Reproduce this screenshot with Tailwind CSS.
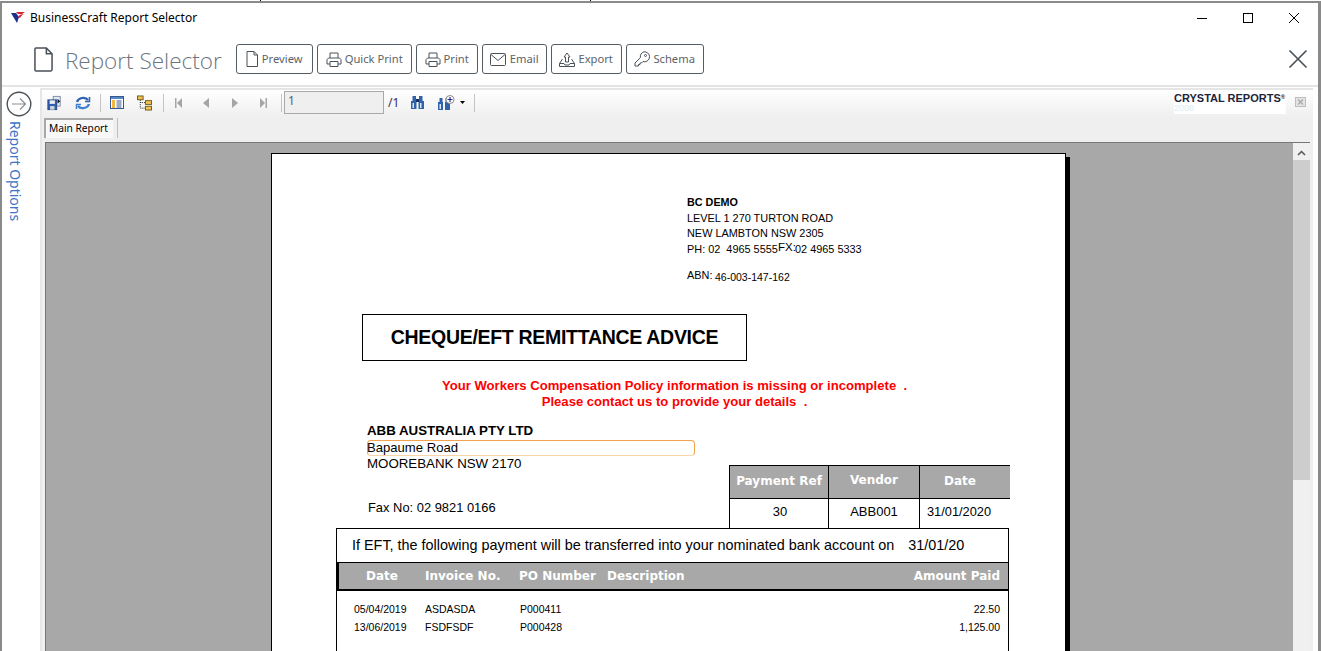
<!DOCTYPE html>
<html lang="en">
  <head>
    <meta charset="UTF-8" />
    <title>BusinessCraft Report Selector</title>
    <script src="https://cdn.jsdelivr.net/npm/@tailwindcss/browser@4"></script>
  </head>
  <body class="w-[1321px] h-[651px] overflow-hidden bg-white font-['Open_Sans',sans-serif]">
    <!-- Desktop strip behind the window -->
    <div class="h-[3px] bg-white border-b-2 border-[#8a8a8a] flex">
      <div class="ml-[260px] w-px h-px bg-black"></div>
      <div class="ml-[329px] w-px h-px bg-black"></div>
    </div>

    <div class="h-[648px] border-l-2 border-r-[3px] border-[#8a8a8a] flex flex-col">
      <!-- Title bar -->
      <div class="h-[30px] flex items-center shrink-0">
        <svg class="ml-[8px] w-[16px] h-[14px]" viewBox="0 0 16 14">
          <path d="M1 2h5l3 4-2 6z" fill="#1c2f8f" />
          <path d="M6 1h9l-3 2H8z" fill="#d8232a" />
          <path d="M8 6c1-2 3-3 6-3-2 1-3 2-4 4z" fill="#d8232a" />
        </svg>
        <span class="ml-[4px] text-[12px] text-black font-['Noto_Sans',sans-serif]">BusinessCraft Report Selector</span>
        <div class="ml-auto flex items-center text-black">
          <svg class="w-[12px] h-[12px]" viewBox="0 0 12 12"><path d="M1 6.500h10" stroke="#000" /></svg>
          <svg class="ml-[34px] w-[12px] h-[12px]" viewBox="0 0 12 12"><rect x="1.500" y="1.500" width="9" height="9" fill="none" stroke="#000" /></svg>
          <svg class="ml-[34px] mr-[18px] w-[12px] h-[12px]" viewBox="0 0 12 12"><path d="M1 1l10 10M11 1L1 11" stroke="#000" /></svg>
        </div>
      </div>

      <!-- Header -->
      <div class="h-[54px] flex items-center shrink-0 border-b-2 border-[#e4e4e4]">
        <svg class="ml-[32px] w-[19px] h-[25px]" viewBox="0 0 20 26" fill="none" stroke="#4a5259" stroke-width="1.600">
          <path d="M2 1h11l6 6v16.500a1.500 1.500 0 0 1-1.500 1.500h-15.500a1 1 0 0 1-1-1V2a1 1 0 0 1 1-1z" />
          <path d="M13 1v6h6" />
        </svg>
        <span class="ml-[12px] pt-[4px] text-[22.500px] leading-none font-light text-[#6b7580] font-['Open_Sans',sans-serif] whitespace-nowrap">Report Selector</span>

        <div class="ml-[14px] flex gap-[4px] text-[11.200px] text-[#5b6369] font-['Noto_Sans',sans-serif]">
          <div class="w-[77px] h-[30px] border border-[#555c62] rounded-[3px] flex items-center justify-center gap-[4px]">
            <svg class="w-[12px] h-[16px]" viewBox="0 0 12 16" fill="none" stroke="#4a5259"><path d="M1 .5h7l3.500 3.500v11.500H1zM8 .5V4h3.500" /></svg>
            Preview
          </div>
          <div class="w-[95px] h-[30px] border border-[#555c62] rounded-[3px] flex items-center justify-center gap-[3px]">
            <svg class="w-[16px] h-[15px]" viewBox="0 0 16 15" fill="none" stroke="#4a5259"><path d="M4 6V1h8v5M1 12V7.500L2.500 6h11L15 7.500V12h-3M4 12H1M4 9.500h8v5H4z" /></svg>
            Quick Print
          </div>
          <div class="w-[62px] h-[30px] border border-[#555c62] rounded-[3px] flex items-center justify-center gap-[3px]">
            <svg class="w-[16px] h-[15px]" viewBox="0 0 16 15" fill="none" stroke="#4a5259"><path d="M4 6V1h8v5M1 12V7.500L2.500 6h11L15 7.500V12h-3M4 12H1M4 9.500h8v5H4z" /></svg>
            Print
          </div>
          <div class="w-[65px] h-[30px] border border-[#555c62] rounded-[3px] flex items-center justify-center gap-[4px]">
            <svg class="w-[16px] h-[13px]" viewBox="0 0 16 13" fill="none" stroke="#4a5259"><rect x=".5" y=".5" width="15" height="12" rx="1" /><path d="M1 1.500l7 6 7-6" /></svg>
            Email
          </div>
          <div class="w-[71px] h-[30px] border border-[#555c62] rounded-[3px] flex items-center justify-center gap-[3px]">
            <svg class="w-[16px] h-[15px]" viewBox="0 0 16 15" fill="none" stroke="#4a5259"><path d="M3.500 7L.5 11.500v3h15v-3L12.500 7M.5 11.500h4.500l1 1.500h4l1-1.500h4.500M5 5l3-4 3 4H9.500v5h-3V5z" /></svg>
            Export
          </div>
          <div class="w-[78px] h-[30px] border border-[#555c62] rounded-[3px] flex items-center justify-center gap-[3px]">
            <svg class="w-[16px] h-[16px]" viewBox="0 0 16 16" fill="none" stroke="#4a5259"><path d="M10 .8a5 5 0 0 1 1 10 5 5 0 0 1-2-.3L7.500 12H6v1.500H4.500V15H1v-3l5.400-5.300A5 5 0 0 1 10 .8z" /><circle cx="11.500" cy="4.500" r="1" /></svg>
            Schema
          </div>
        </div>

        <svg class="ml-auto mr-[10px] w-[20px] h-[20px]" viewBox="0 0 20 20"><path d="M1.500 1.500l17 17M18.500 1.500l-17 17" stroke="#4a5259" stroke-width="1.700" /></svg>
      </div>

      <!-- Body -->
      <div class="flex-1 flex min-h-0">
        <!-- Report options rail -->
        <div class="w-[38px] shrink-0 flex flex-col items-center pt-[4px]">
          <svg class="w-[26px] h-[26px] mr-[5px]" viewBox="0 0 26 26" fill="none"><circle cx="13" cy="13" r="11.800" stroke="#4a5259" stroke-width="1.400" /><path d="M6 13h13M14 7.500l5.500 5.500-5.500 5.500" stroke="#8a9096" stroke-width="1.200" /></svg>
          <span class="mt-[4px] mr-[13px] text-[14px] leading-[18px] text-[#3f74c4] font-['Noto_Sans',sans-serif] whitespace-nowrap [writing-mode:vertical-rl]">Report Options</span>
        </div>

        <!-- Viewer -->
        <div class="w-[1273px] mt-[1px] border-l-2 border-t-2 border-[#e6e6e6] bg-[#efefef] flex flex-col min-h-0">
          <!-- Viewer toolbar -->
          <div class="h-[27px] pb-[2px] flex items-center shrink-0 bg-gradient-to-b from-white to-[#efefef]">
            <svg class="ml-[5px] w-[15px] h-[16px]" viewBox="0 0 17 17">
              <rect x="7" y="1" width="8" height="11" fill="#dfe6f2" stroke="#7b8aa8" />
              <path d="M12 4l3 2.500-3 2.500z" fill="#111" />
              <rect x="1" y="5" width="10" height="11" fill="#2f5fae" stroke="#24437c" />
              <rect x="3" y="5.500" width="6" height="4" fill="#e8edf6" />
              <rect x="3.500" y="12" width="5" height="4" fill="#d0d6e0" />
            </svg>
            <svg class="ml-[13px] w-[16px] h-[14px]" viewBox="0 0 16 14" fill="none" stroke-width="2.200">
              <path d="M2 6c1-4 8-6 11-2" stroke="#2f62b5" />
              <path d="M14 8c-1 4-8 6-11 2" stroke="#3f7fd0" />
              <path d="M14.500 1v4.500H10" stroke="#2f62b5" stroke-width="1.500" />
              <path d="M1.500 13V8.500H6" stroke="#3f7fd0" stroke-width="1.500" />
            </svg>
            <div class="ml-[9px] w-px h-[18px] bg-[#c4c4c4]"></div>
            <svg class="ml-[9px] w-[14px] h-[13px]" viewBox="0 0 14 13">
              <rect x=".5" y=".5" width="13" height="12" fill="#fff" stroke="#34598f" />
              <rect x="1" y="1" width="12" height="2" fill="#5a86c5" />
              <rect x="2" y="4" width="3" height="8" fill="#f0b840" />
              <path d="M6.500 5h5M6.500 7h5M6.500 9h5M6.500 11h5" stroke="#34598f" />
            </svg>
            <svg class="ml-[13px] w-[15px] h-[16px]" viewBox="0 0 16 16">
              <rect x=".5" y=".5" width="6" height="4" fill="#f2c14e" stroke="#6b5a20" />
              <rect x="9" y="5.500" width="6.500" height="4" fill="#f2c14e" stroke="#6b5a20" />
              <rect x="9" y="11.500" width="6.500" height="4" fill="#f2c14e" stroke="#6b5a20" />
              <path d="M3.500 5v8.500H9M3.500 7.500H9" stroke="#222" stroke-dasharray="1 1" fill="none" />
            </svg>
            <div class="ml-[11px] w-px h-[18px] bg-[#c4c4c4]"></div>
            <svg class="ml-[11px] w-[7px] h-[10px]" viewBox="0 0 7 10" fill="#a5a5a5"><rect width="1.500" height="10" /><path d="M7 0v10L2 5z" /></svg>
            <svg class="ml-[21px] w-[6px] h-[10px]" viewBox="0 0 6 10" fill="#a5a5a5"><path d="M6 0v10L0 5z" /></svg>
            <svg class="ml-[23px] w-[6px] h-[10px]" viewBox="0 0 6 10" fill="#a5a5a5"><path d="M0 0v10l6-5z" /></svg>
            <svg class="ml-[22px] w-[7px] h-[10px]" viewBox="0 0 7 10" fill="#a5a5a5"><rect x="5.500" width="1.500" height="10" /><path d="M0 0v10l5-5z" /></svg>
            <div class="ml-[14px] w-px h-[18px] bg-[#c4c4c4]"></div>
            <div class="ml-[2px] w-[100px] h-[23px] border border-[#a9a9a9] bg-[#efefef] text-[12px] leading-[17px] pl-[3px] text-[#5c5c80] font-['Noto_Sans',sans-serif]">1</div>
            <span class="ml-[4px] text-[12px] text-[#3a2a60] font-['Noto_Sans',sans-serif]">/1</span>
            <svg class="ml-[11px] w-[15px] h-[15px]" viewBox="0 0 15 15" fill="#2f62a8"><rect x="1" y="6" width="5.500" height="8" /><rect x="8.500" y="6" width="5.500" height="8" /><rect x="2.500" y="1" width="3.500" height="6" /><rect x="9" y="1" width="3.500" height="6" /><rect x="6" y="4" width="3" height="3" fill="#16306b" /><rect x="2.500" y="8" width="1.500" height="5" fill="#dbe6f6" /><rect x="10" y="8" width="1.500" height="5" fill="#dbe6f6" /></svg>
            <svg class="ml-[13px] w-[17px] h-[16px]" viewBox="0 0 17 16"><g fill="#2f62a8"><rect x="0" y="7" width="5" height="8" /><rect x="7" y="7" width="5" height="8" /><rect x="1.500" y="3" width="3" height="5" /><rect x="7.500" y="3" width="3" height="5" /></g><rect x="1.500" y="9" width="1.500" height="5" fill="#dbe6f6" /><circle cx="12" cy="4.500" r="4" fill="#fff" stroke="#8a8a8a" /><path d="M9.500 4.500h5M12 2v5" stroke="#26308f" stroke-width="1.200" /></svg>
            <svg class="ml-[5px] w-[5px] h-[3px]" viewBox="0 0 5 3"><path d="M0 0h5L2.500 3z" fill="#000" /></svg>
            <div class="ml-[9px] w-px h-[18px] bg-[#c4c4c4]"></div>

            <!-- Crystal logo -->
            <div class="ml-auto mr-[7px] flex items-start">
              <div class="w-[112px] h-[22px] bg-white font-['Liberation_Sans',sans-serif] whitespace-nowrap">
                <div class="text-[11px] leading-[12px] font-bold text-[#20243a]">CRYSTAL REPORTS<sup class="text-[6px]">®</sup></div>
                <div class="text-[9px] leading-[9px] text-[#dcecf0]">2008</div>
              </div>
              <svg class="ml-[9px] mt-[5px] w-[11px] h-[10px]" viewBox="0 0 11 10"><rect x=".5" y=".5" width="10" height="9" fill="#e4e4e4" stroke="#bdbdbd" /><path d="M3 2.500l5 5M8 2.500l-5 5" stroke="#a8a8a8" stroke-width="1.300" /></svg>
            </div>
          </div>

          <!-- Tab strip -->
          <div class="h-[25px] flex items-start shrink-0 pt-[1px]">
            <div class="ml-[2px] w-[69px] h-[20px] border-l-2 border-t-2 border-[#a8a8a8] bg-[#f8f8f8] text-[10.200px] leading-[17px] pl-[3px] text-black font-['Noto_Sans',sans-serif] whitespace-nowrap">Main Report</div>
            <div class="ml-[4px] w-px h-[20px] bg-[#bdbdbd]"></div>
          </div>

          <!-- Page area -->
          <div class="ml-[3px] mr-[3px] flex-1 min-h-0 border-t border-l border-[#777] flex">
            <div class="relative flex-1 bg-[#a8a8a8] overflow-hidden">
              <div class="absolute left-[225px] top-[10px] w-[795px] h-[600px] bg-white border border-black shadow-[4px_4px_0_#000] font-['Liberation_Sans',sans-serif] text-black">
                <!-- Company block -->
                <div class="absolute left-[415px] top-[42px] text-[10.800px] font-bold leading-[12px] whitespace-nowrap">BC DEMO</div>
                <div class="absolute left-[415px] top-[58px] text-[10.900px] leading-[12px] whitespace-nowrap">LEVEL 1 270 TURTON ROAD</div>
                <div class="absolute left-[415px] top-[73px] text-[10.900px] leading-[12px] whitespace-nowrap">NEW LAMBTON NSW 2305</div>
                <div class="absolute left-[415px] top-[89px] text-[10.900px] leading-[12px] whitespace-nowrap">PH: 02&nbsp; 4965 5555</div>
                <div class="absolute left-[506px] top-[87px] text-[11.500px] leading-[12px] whitespace-nowrap">FX:</div>
                <div class="absolute left-[523px] top-[89px] text-[10.900px] leading-[12px] whitespace-nowrap">02 4965 5333</div>
                <div class="absolute left-[415px] top-[115px] text-[10.900px] leading-[12px] whitespace-nowrap">ABN:</div>
                <div class="absolute left-[443px] top-[117px] text-[10.500px] leading-[12px] whitespace-nowrap">46-003-147-162</div>

                <!-- Title box -->
                <div class="absolute left-[90px] top-[160px] w-[385px] h-[47px] border border-black flex items-center justify-center text-[19.500px] font-bold tracking-[-0.3px] whitespace-nowrap">CHEQUE/EFT REMITTANCE ADVICE</div>

                <!-- Warning -->
                <div class="absolute left-[90px] top-[224px] w-[625px] text-center text-[13.100px] font-bold leading-[16px] text-[#ff0000]">
                  <div>Your Workers Compensation Policy information is missing or incomplete&nbsp; .</div>
                  <div>Please contact us to provide your details&nbsp; .</div>
                </div>

                <!-- Vendor address -->
                <div class="absolute left-[95px] top-[269px] text-[13.300px] font-bold leading-[15px] whitespace-nowrap">ABB AUSTRALIA PTY LTD</div>
                <div class="absolute left-[95px] top-[286px] w-[328px] h-[16px] border border-[#f2a24a] border-b-[#f8d4a8] rounded-[4px]"></div>
                <div class="absolute left-[95px] top-[286px] text-[13.100px] leading-[15px] whitespace-nowrap">Bapaume Road</div>
                <div class="absolute left-[95px] top-[302px] text-[13.300px] leading-[15px] whitespace-nowrap">MOOREBANK NSW 2170</div>
                <div class="absolute left-[96px] top-[346px] text-[12.900px] leading-[15px] whitespace-nowrap">Fax No: 02 9821 0166</div>

                <!-- Payment table -->
                <div class="absolute left-[457px] top-[311px] w-[281px] grid grid-cols-[99px_91px_90px] border-t border-l border-black">
                  <div class="h-[32px] bg-[#a8a8a8] border-r border-black flex items-center justify-center pb-[3px] text-[12px] font-bold text-white font-['DejaVu_Sans',sans-serif] whitespace-nowrap">Payment Ref</div>
                  <div class="h-[32px] bg-[#a8a8a8] border-r border-black flex items-center justify-center pb-[4px] text-[12px] font-bold text-white font-['DejaVu_Sans',sans-serif]">Vendor</div>
                  <div class="h-[32px] bg-[#a8a8a8] flex items-center justify-center pr-[10px] pb-[3px] text-[12px] font-bold text-white font-['DejaVu_Sans',sans-serif]">Date</div>
                  <div class="h-[31px] border-t border-r border-black flex items-center justify-center pl-[2px] pb-[5px] text-[13px]">30</div>
                  <div class="h-[31px] border-t border-r border-black flex items-center justify-center pb-[5px] text-[13px]">ABB001</div>
                  <div class="h-[31px] border-t border-black flex items-center justify-center pr-[12px] pb-[5px] text-[12.800px]">31/01/2020</div>
                </div>

                <!-- EFT line -->
                <div class="absolute left-[64px] top-[374px] w-[673px] h-[35px] border-t border-l border-r border-black flex items-center pl-[15px] text-[14.400px] whitespace-nowrap">If EFT, the following payment will be transferred into your nominated bank account on<span class="ml-[14px]">31/01/20</span></div>

                <!-- Lines table -->
                <div class="absolute left-[64px] top-[408px] w-[673px] h-[190px] border-l border-r border-black">
                  <div class="relative h-[29px] bg-[#a8a8a8] border-t border-l-2 border-b-2 border-black text-[12px] font-bold text-white font-['DejaVu_Sans',sans-serif] whitespace-nowrap leading-[26px]">
                    <span class="absolute left-[27px] top-0">Date</span>
                    <span class="absolute left-[86px] top-0">Invoice No.</span>
                    <span class="absolute left-[180px] top-0">PO Number</span>
                    <span class="absolute left-[268px] top-0">Description</span>
                    <span class="absolute right-[8px] top-0">Amount Paid</span>
                  </div>
                  <div class="relative text-[10.500px] leading-[12px] whitespace-nowrap">
                    <span class="absolute left-[17px] top-[12px]">05/04/2019</span>
                    <span class="absolute left-[88px] top-[12px]">ASDASDA</span>
                    <span class="absolute left-[183px] top-[12px]">P000411</span>
                    <span class="absolute right-[8px] top-[12px]">22.50</span>
                    <span class="absolute left-[17px] top-[30px]">13/06/2019</span>
                    <span class="absolute left-[88px] top-[30px]">FSDFSDF</span>
                    <span class="absolute left-[183px] top-[30px]">P000428</span>
                    <span class="absolute right-[8px] top-[30px]">1,125.00</span>
                  </div>
                </div>
              </div>
            </div>
            <!-- Scrollbar -->
            <div class="w-[17px] shrink-0 bg-[#f0f0f0] flex flex-col items-center">
              <svg class="mt-[7px] w-[9px] h-[6px]" viewBox="0 0 9 6" fill="none"><path d="M1 5l3.500-3.500L8 5" stroke="#555" stroke-width="1.500" /></svg>
              <div class="mt-[4px] w-full h-[320px] bg-[#cdcdcd]"></div>
            </div>
          </div>
        </div>
      </div>
    </div>
  </body>
</html>
